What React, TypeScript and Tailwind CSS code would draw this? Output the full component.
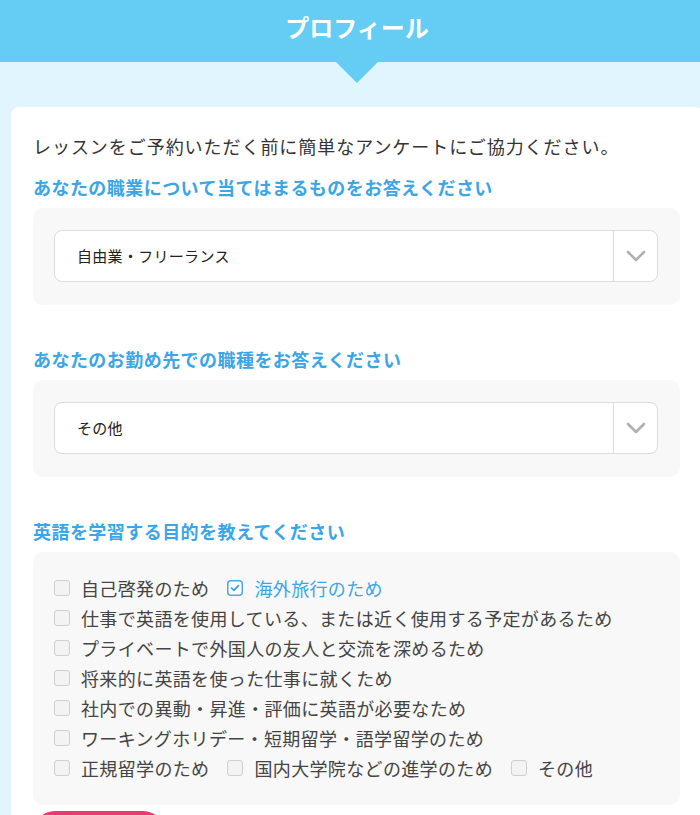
import React from "react";

const font = { fontFamily: '"Noto Sans CJK JP", "Noto Sans", sans-serif' };

function Chevron() {
  return (
    <svg width="20" height="12" viewBox="0 0 20 12" fill="none">
      <path d="M2 2 L10 10 L18 2" stroke="#b0b0b0" strokeWidth="2.6" strokeLinecap="round" strokeLinejoin="round" />
    </svg>
  );
}

function Select({ value }: { value: string }) {
  return (
    <div className="flex h-[52px] items-stretch rounded-[8px] border border-[#dcdcdc] bg-white">
      <div className="flex flex-1 items-center pl-[22px] text-[15px] tracking-[0.3px] text-[#222]">{value}</div>
      <div className="flex w-[44px] items-center justify-center border-l border-[#dcdcdc]">
        <Chevron />
      </div>
    </div>
  );
}

function Box({ children, className }: { children: React.ReactNode; className?: string }) {
  return <div className={"rounded-[10px] bg-[#f8f8f8] " + (className ?? "")}>{children}</div>;
}

function Heading({ children, className }: { children: React.ReactNode; className?: string }) {
  return (
    <div className={"text-[18px] font-bold leading-[27px] tracking-[0.45px] text-[#3aa6e8] " + (className ?? "")}>
      {children}
    </div>
  );
}

function Check({ label, checked }: { label: string; checked?: boolean }) {
  return (
    <span className="mr-[18px] inline-flex items-center">
      {checked ? (
        <svg width="16" height="16" viewBox="0 0 16 16" className="shrink-0">
          <rect x="0.75" y="0.75" width="14.5" height="14.5" rx="3" fill="#fff" stroke="#4aa8e8" strokeWidth="1.5" />
          <path d="M4.6 8.2 L7 10.4 L11.4 5.6" fill="none" stroke="#3a9fe0" strokeWidth="1.8" strokeLinecap="round" strokeLinejoin="round" />
        </svg>
      ) : (
        <span className="block h-[16px] w-[16px] shrink-0 rounded-[3px] border border-[#cfcfcf] bg-[#f3f3f3]" />
      )}
      <span className={"ml-[11px] text-[18px] tracking-[0.35px] " + (checked ? "text-[#3aa6e8]" : "text-[#444]")}>
        {label}
      </span>
    </span>
  );
}

export default function App() {
  return (
    <div className="h-[815px] w-[700px] overflow-hidden bg-[#e0f5fe]" style={font}>
      <div className="w-[714px]">
        <div className="flex h-[62px] justify-center bg-[#65ccf3] pt-[13px]">
          <h1 className="text-[24px] font-bold leading-[28px] text-white">プロフィール</h1>
        </div>
        <div className="flex justify-center">
          <div className="h-0 w-0 border-x-[21px] border-t-[21px] border-x-transparent border-t-[#65ccf3]" />
        </div>
        <div className="mx-[11px] mt-[24px] rounded-[8px] bg-white pl-[22px] pr-[23px] pt-[26px] pb-[20px]">
          <p className="text-[18px] leading-[27px] tracking-[0.95px] text-[#333]">
            レッスンをご予約いただく前に簡単なアンケートにご協力ください。
          </p>
          <Heading className="mt-[14px] mb-[7px]">あなたの職業について当てはまるものをお答えください</Heading>
          <Box className="pl-[21px] pr-[22px] pt-[22px] pb-[23px]">
            <Select value="自由業・フリーランス" />
          </Box>
          <Heading className="mt-[41px] mb-[7px]">あなたのお勤め先での職種をお答えください</Heading>
          <Box className="pl-[21px] pr-[22px] pt-[22px] pb-[23px]">
            <Select value="その他" />
          </Box>
          <Heading className="mt-[41px] mb-[7px]">英語を学習する目的を教えてください</Heading>
          <Box className="pl-[21px] pr-[22px] pt-[21px] pb-[22px]">
            <div className="flex h-[30px] items-center">
              <Check label="自己啓発のため" />
              <Check label="海外旅行のため" checked />
            </div>
            <div className="flex h-[30px] items-center">
              <Check label="仕事で英語を使用している、または近く使用する予定があるため" />
            </div>
            <div className="flex h-[30px] items-center">
              <Check label="プライベートで外国人の友人と交流を深めるため" />
            </div>
            <div className="flex h-[30px] items-center">
              <Check label="将来的に英語を使った仕事に就くため" />
            </div>
            <div className="flex h-[30px] items-center">
              <Check label="社内での異動・昇進・評価に英語が必要なため" />
            </div>
            <div className="flex h-[30px] items-center">
              <Check label="ワーキングホリデー・短期留学・語学留学のため" />
            </div>
            <div className="flex h-[30px] items-center">
              <Check label="正規留学のため" />
              <Check label="国内大学院などの進学のため" />
              <Check label="その他" />
            </div>
          </Box>
          <div className="mt-[6px] h-[44px] w-[132px] rounded-full bg-[#ea3870]" />
        </div>
      </div>
    </div>
  );
}
